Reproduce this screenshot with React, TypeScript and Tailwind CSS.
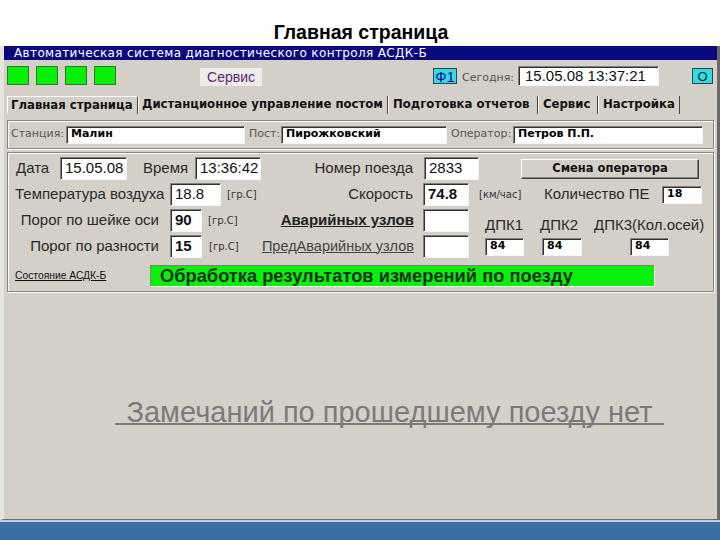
import React from "react";

const sunken =
  "bg-white border border-t-[#808080] border-l-[#808080] border-r-[#f6f6f6] border-b-[#f6f6f6] shadow-[inset_1px_1px_0_#303030]";
const etched =
  "border border-[#8a8780] shadow-[inset_1px_1px_0_#ffffff,1px_1px_0_#ffffff]";
const dv = "font-['DejaVu_Sans',sans-serif]";
const lbl = "text-[15px] text-[#2a2a2a] whitespace-nowrap";
const unit = "text-[10px] text-[#333] whitespace-nowrap font-['DejaVu_Sans',sans-serif]";

function Inp({ w, h = 23, children, cls = "" }: { w: number; h?: number; children?: React.ReactNode; cls?: string }) {
  return (
    <div className={`${sunken} flex items-center pl-[4px] shrink-0 ${cls}`} style={{ width: w, height: h }}>
      {children}
    </div>
  );
}

export default function App() {
  return (
    <div className="w-[720px] h-[540px] bg-white flex flex-col overflow-hidden font-['Liberation_Sans',Arial,sans-serif]">
      <div className="h-[46px] shrink-0 flex items-end justify-center pb-[4px]">
        <div className="text-[19.5px] font-bold text-black leading-none ml-[2px]">Главная страница</div>
      </div>

      <div className="flex-1 flex flex-col bg-[#d4d0c8] border-l-[4px] border-l-[#e6e4de] border-r-[3px] border-r-[#6a6a6a] border-b border-b-[#6a6a6a]">
        {/* title bar */}
        <div className={`h-[14px] shrink-0 bg-[#0a0a7e] text-white text-[12px] leading-[14px] pl-[10px] ${dv} tracking-[0.37px]`}>
          Автоматическая система диагностического контроля АСДК-Б
        </div>

        {/* toolbar */}
        <div className="h-[36px] shrink-0 flex items-start pl-[3px] pt-[6px]">
          <div className="flex gap-[7px]">
            {[0, 1, 2, 3].map((i) => (
              <div key={i} className="w-[22px] h-[19px] bg-[#05f005] border border-[#2c7a2c]" />
            ))}
          </div>
          <div className="ml-[84px] mt-[2px] w-[62px] h-[18px] bg-[#eeecea] flex items-center justify-center text-[14px] text-[#5e2470]">
            Сервис
          </div>
          <div className="ml-[171px] mt-[2px] w-[24px] h-[16px] bg-[#30dede] border border-[#3a3a60] flex items-center justify-center text-[15px] leading-none text-[#0a0aa0]">
            Ф1
          </div>
          <div className={`ml-[5px] mt-[4px] w-[51px] text-[11px] text-[#555] ${dv}`}>Сегодня:</div>
          <div className={`${sunken} ml-[5px] w-[141px] h-[20px] flex items-center pl-[6px] text-[15px] text-[#111]`}>
            15.05.08 13:37:21
          </div>
          <div className="ml-[33px] mt-[2px] w-[21px] h-[16px] bg-[#30dede] border border-[#3a3a60] flex items-center justify-center text-[13px] leading-none text-[#102040]">
            O
          </div>
        </div>

        {/* tabs */}
        <div className={`h-[18px] shrink-0 flex items-stretch ml-[3px] text-[11.7px] font-bold text-[#111] ${dv}`}>
          <div className="w-[131px] flex items-center pl-[3px] border-t border-l border-t-white border-l-white border-r border-r-[#404040] whitespace-nowrap">
            Главная страница
          </div>
          <div className="w-[250px] flex items-center pl-[4px] border-r border-r-[#404040] shadow-[inset_1px_0_0_#fff] whitespace-nowrap">
            Дистанционное управление постом
          </div>
          <div className="w-[150px] flex items-center pl-[5px] border-r border-r-[#404040] shadow-[inset_1px_0_0_#fff] whitespace-nowrap">
            Подготовка отчетов
          </div>
          <div className="w-[60px] flex items-center pl-[5px] border-r border-r-[#404040] shadow-[inset_1px_0_0_#fff] whitespace-nowrap">
            Сервис
          </div>
          <div className="w-[82px] flex items-center pl-[5px] border-r border-r-[#404040] shadow-[inset_1px_0_0_#fff] whitespace-nowrap">
            Настройка
          </div>
        </div>

        {/* station panel */}
        <div className={`${etched} mx-[3px] mt-[6px] h-[29px] shrink-0 flex items-center`}>
          <div className={`w-[58px] pl-[3px] text-[11px] text-[#555] ${dv}`}>Станция:</div>
          <Inp w={179} h={18} cls={`text-[11px] font-bold text-black ${dv}`}>Малин</Inp>
          <div className={`w-[36px] pl-[4px] text-[11px] text-[#555] ${dv}`}>Пост:</div>
          <Inp w={166} h={18} cls={`text-[11px] font-bold text-black ${dv}`}>Пирожковский</Inp>
          <div className={`w-[66px] pl-[4px] text-[11px] text-[#555] ${dv}`}>Оператор:</div>
          <Inp w={190} h={18} cls={`text-[11px] font-bold text-black ${dv}`}>Петров П.П.</Inp>
        </div>

        {/* data panel */}
        <div className={`${etched} mx-[3px] mt-[3px] shrink-0 flex flex-col pb-[4px]`}>
          {/* row 1 */}
          <div className="mt-[4px] h-[23px] flex items-center">
            <div className={`w-[52px] pl-[8px] ${lbl}`}>Дата</div>
            <Inp w={67} cls="text-[15px] text-[#111]">15.05.08</Inp>
            <div className={`w-[68px] pl-[16px] ${lbl}`}>Время</div>
            <Inp w={66} cls="text-[15px] text-[#111]">13:36:42</Inp>
            <div className={`w-[163px] pr-[11px] text-right ${lbl}`}>Номер поезда</div>
            <Inp w={55} cls="text-[15px] text-[#111]">2833</Inp>
            <div className={`ml-[42px] w-[178px] h-[20px] flex items-center justify-center border border-t-white border-l-white border-r-[#404040] border-b-[#404040] shadow-[inset_-1px_-1px_0_#808080] text-[11.5px] font-bold text-[#111] ${dv}`}>
              Смена оператора
            </div>
          </div>
          {/* row 2 */}
          <div className="mt-[3px] h-[23px] flex items-center">
            <div className={`w-[162px] pl-[7px] ${lbl}`}>Температура воздуха</div>
            <Inp w={51} cls="text-[15px] text-[#111]">18.8</Inp>
            <div className={`w-[40px] pl-[6px] ${unit}`}>[гр.С]</div>
            <div className={`w-[162px] pr-[10px] text-right ${lbl}`}>Скорость</div>
            <Inp w={46} cls="text-[15px] font-bold text-[#111]">74.8</Inp>
            <div className={`w-[75px] pl-[10px] ${unit}`}>[км/час]</div>
            <div className={`w-[118px] ${lbl}`}>Количество ПЕ</div>
            <Inp w={40} h={18} cls={`text-[11px] font-bold text-black ${dv}`}>18</Inp>
          </div>
          {/* row 3 */}
          <div className="mt-[3px] h-[23px] flex items-center">
            <div className={`w-[162px] pr-[11px] text-right ${lbl}`}>Порог по шейке оси</div>
            <Inp w={32} cls="text-[15px] font-bold text-[#111]">90</Inp>
            <div className={`w-[47px] pl-[6px] ${unit}`}>[гр.С]</div>
            <div className="w-[174px] pr-[9px] text-right text-[15px] font-bold underline text-[#222] whitespace-nowrap">
              Аварийных узлов
            </div>
            <Inp w={46} />
            <div className={`w-[71px] pl-[16px] self-end translate-y-[4px] ${lbl}`}>ДПК1</div>
            <div className={`w-[54px] self-end translate-y-[4px] ${lbl}`}>ДПК2</div>
            <div className={`self-end translate-y-[4px] ${lbl}`}>ДПК3(Кол.осей)</div>
          </div>
          {/* row 4 */}
          <div className="mt-[3px] h-[23px] flex items-center">
            <div className={`w-[162px] pr-[11px] text-right ${lbl}`}>Порог по разности</div>
            <Inp w={32} cls="text-[15px] font-bold text-[#111]">15</Inp>
            <div className={`w-[59px] pl-[7px] ${unit}`}>[гр.С]</div>
            <div className="w-[162px] pr-[9px] text-right text-[14.5px] underline text-[#444] whitespace-nowrap">
              ПредАварийных узлов
            </div>
            <Inp w={46} />
            <Inp w={39} h={18} cls={`ml-[16px] text-[11px] font-bold text-black ${dv}`}>84</Inp>
            <Inp w={40} h={18} cls={`ml-[18px] text-[11px] font-bold text-black ${dv}`}>84</Inp>
            <Inp w={39} h={18} cls={`ml-[48px] text-[11px] font-bold text-black ${dv}`}>84</Inp>
          </div>
          {/* row 5 */}
          <div className="mt-[7px] h-[22px] flex items-center">
            <div className="w-[142px] pl-[7px] text-[10.3px] underline text-[#111] whitespace-nowrap">Состояние АСДК-Б</div>
            <div className="w-[505px] h-[22px] bg-[#0af00a] border border-t-[#808080] border-l-[#808080] border-r-white border-b-white flex items-center pl-[9px] text-[18.3px] font-bold text-[#123012] whitespace-nowrap">
              Обработка результатов измерений по поезду
            </div>
          </div>
        </div>

        {/* remarks */}
        <div className="flex-1 flex justify-center">
          <div className="mt-[108px] h-[25px] ml-[58px] px-[11px] border-b-2 border-[#7a7a7a] text-[29px] leading-[25px] text-[#7a7a7a] whitespace-nowrap">
            Замечаний по прошедшему поезду нет
          </div>
        </div>
        <div className="h-[2px] shrink-0" />
      </div>

      <div className="h-[20px] shrink-0 bg-[#3a6ea5] border-t-2 border-[#c0d0e0]" />
    </div>
  );
}
